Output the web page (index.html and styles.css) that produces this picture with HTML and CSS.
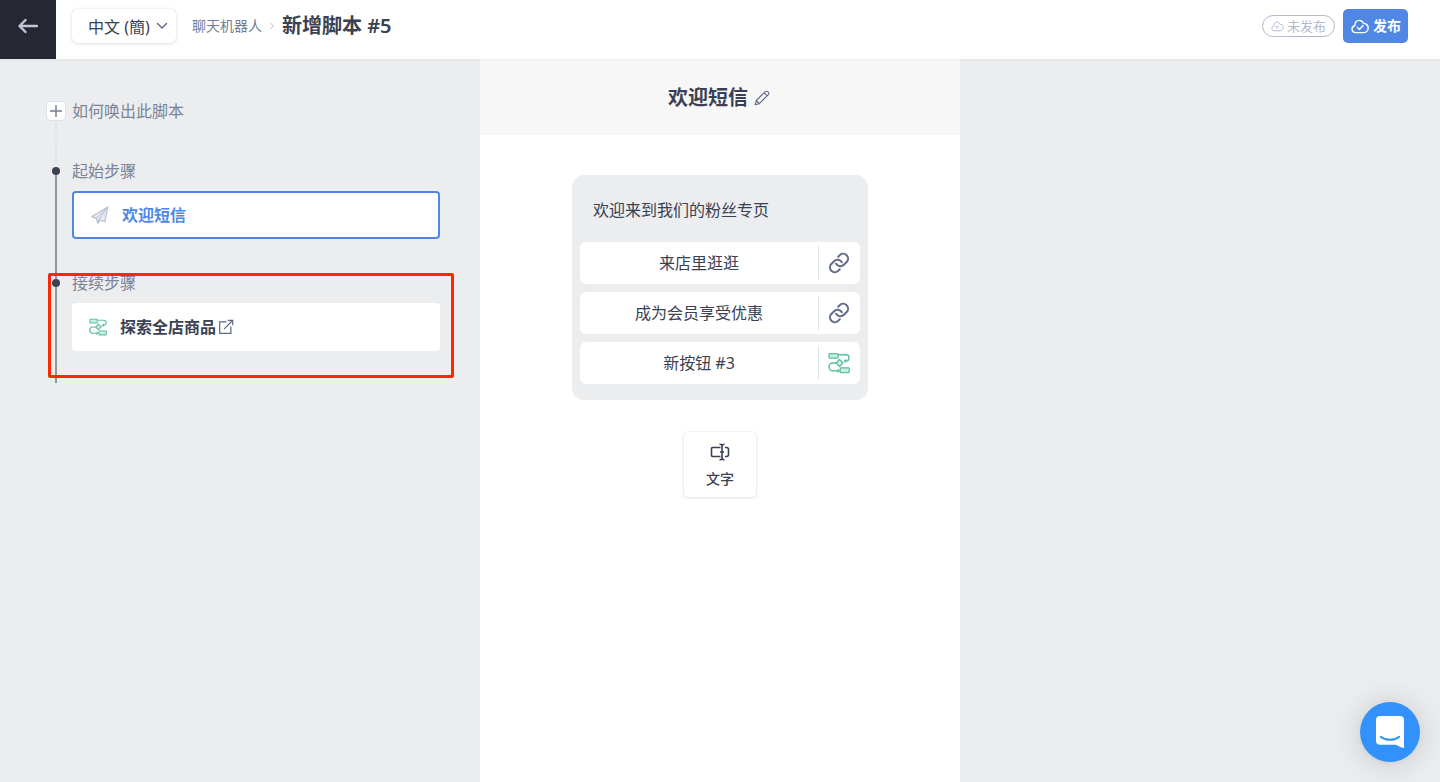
FILE: index.html
```html
<!DOCTYPE html>
<html lang="zh-CN">
<head>
<meta charset="utf-8">
<title>新增脚本 #5</title>
<link rel="stylesheet" href="styles.css">
</head>
<body>
<svg class="defs" aria-hidden="true">
  <symbol id="flow" viewBox="0 0 22 22">
    <g fill="#c9efe3" stroke="#5cbfa1" stroke-width="1.3">
      <rect x="1.1" y="1.6" width="9" height="4.6" rx=".6"/>
      <rect x="12.2" y="15.8" width="9" height="4.8" rx=".6"/>
      <path d="M11.5 7.500l3.500 3.500-3.500 3.500-3.500-3.500z"/>
    </g>
    <g fill="none" stroke="#5cbfa1" stroke-width="1.4">
      <path d="M10.200 2.800h8a2.700 2.700 0 0 1 2.700 2.700v.7A2.700 2.700 0 0 1 18.200 8.900h-1M8 11H4.600a3.500 3.500 0 0 0-3.500 3.500v.7a3.500 3.500 0 0 0 3.500 3.500h6.500"/>
    </g>
    <path d="M18.200 6.700v4.400l-2.800-2.200zM9.300 16.500v4.400l2.900-2.200z" fill="#5cbfa1"/>
  </symbol>
  <symbol id="link" viewBox="1 1 22 22">
    <g fill="none" stroke="#626c8a" stroke-width="2" stroke-linecap="round">
      <path d="M9.100 12.700a5 5 0 0 0 7.800 1.100l3-3a4.900 4.900 0 0 0-6.900-6.900l-1.800 1.800"/>
      <path d="M14.900 11.300a5 5 0 0 0-7.800-1.100l-3 3a4.900 4.900 0 0 0 6.900 6.900l1.800-1.800"/>
    </g>
  </symbol>
</svg>

<header class="topbar">
  <button class="back" aria-label="返回">
    <svg width="20" height="16" viewBox="0 0 20 16"><path d="M7.500 2L1.500 8l6 6M2 8h17" fill="none" stroke="#c3c6d8" stroke-width="2.400" stroke-linecap="round" stroke-linejoin="round"/></svg>
  </button>
  <div class="language">
    <select aria-label="语言"><option>中文 (簡)</option></select>
    <svg class="chevron" width="12" height="8" viewBox="0 0 12 8"><path d="M1.500 1.500L6 6l4.500-4.500" fill="none" stroke="#5d6782" stroke-width="1.400" stroke-linecap="round" stroke-linejoin="round"/></svg>
  </div>
  <nav class="crumbs">
    <a href="#">聊天机器人</a>
    <svg width="4" height="8" viewBox="0 0 4 8"><path d="M.6 1.200L3.300 4 .6 6.800" fill="none" stroke="#b5bac6"/></svg>
    <h1>新增脚本 #5</h1>
  </nav>
  <span class="status">
    <svg width="13" height="11" viewBox="0 0 20 16"><path d="M5 14.600a3.900 3.900 0 0 1-.8-7.700C4.300 3.500 6.500 1.200 9.200 1.200c2.200 0 3.900 1.200 4.700 3.300 2.800-.1 5.100 2.200 5.100 5s-2.300 5.100-5 5.100zM7.500 6.500l4.500 4.600M12 6.500l-4.500 4.600" fill="none" stroke="currentColor" stroke-width="1.500"/></svg>
    未发布
  </span>
  <button class="publish">
    <svg width="18" height="15" viewBox="0 0 20 16"><path d="M5 14.800a3.900 3.900 0 0 1-.8-7.700C4.300 3.500 6.500 1.200 9.200 1.200c2.200 0 3.900 1.200 4.700 3.300 2.800-.1 5.200 2.200 5.200 5.100s-2.300 5.200-5.100 5.200zM7.200 9l2.200 2.300 4-4.300" fill="none" stroke="currentColor" stroke-width="1.600" stroke-linecap="round" stroke-linejoin="round"/></svg>
    发布
  </button>
</header>

<main class="workspace">
  <aside class="outline">
    <section class="step trigger">
      <div class="rail">
        <button class="add" aria-label="新增"><svg width="12" height="12" viewBox="0 0 12 12"><path d="M6 0v12M0 6h12" stroke="#747c91" stroke-width="1.400"/></svg></button>
        <span class="line dashed"></span>
      </div>
      <h2>如何唤出此脚本</h2>
    </section>
    <section class="step">
      <div class="rail"><span class="lead dashed"></span><span class="dot"></span><span class="line"></span></div>
      <div class="body">
        <h2>起始步骤</h2>
        <button class="card active">
          <svg width="18" height="18" viewBox="0 0 18 18"><path d="M16.800.900L.9 10.600l4.300 1.900 1.800 4.600 2.100-2.900 4.800 1.600z" fill="#e6eaf2" stroke="#b8c0cf" stroke-width="1.200" stroke-linejoin="round"/><path d="M16.800.900L5.200 12.500M16.800.900L7.800 13.600 7 17.100M7.800 13.600l1.300.600" fill="none" stroke="#b8c0cf"/></svg>
          <span>欢迎短信</span>
        </button>
      </div>
    </section>
    <section class="step">
      <div class="rail"><span class="lead"></span><span class="dot"></span><span class="line"></span></div>
      <div class="body">
        <h2>接续步骤</h2>
        <a class="card" href="#">
          <svg width="18" height="18"><use href="#flow"/></svg>
          <span class="card-link">探索全店商品<svg width="16" height="16" viewBox="0 0 16 16"><path d="M8.500 2.800H1.700v11.500h11.200V7.500M9.800 1.300h4.900v4.900M14.500 1.500L6 10.200" fill="none" stroke="#5d6782" stroke-width="1.200"/></svg></span>
        </a>
      </div>
      <span class="highlight"></span>
    </section>
  </aside>

  <section class="editor">
    <header class="editor-head">
      <h2>欢迎短信</h2>
      <button class="edit" aria-label="编辑"><svg width="16" height="16" viewBox="0 0 16 16"><path d="M1.200 14.800l1.100-4.300 8.800-8.700c.8-.8 2.300-.6 3 .1s.8 2.100 0 2.900l-8.800 8.800zM2.300 10.500l3 3.100M10.200 2.700l3 3.100" fill="none" stroke="#626c8a" stroke-width="1.100" stroke-linejoin="round"/></svg></button>
    </header>
    <div class="canvas">
      <div class="bubble">
        <p>欢迎来到我们的粉丝专页</p>
        <div class="reply"><button class="label">来店里逛逛</button><button class="action" aria-label="链接"><svg width="22" height="22"><use href="#link"/></svg></button></div>
        <div class="reply"><button class="label">成为会员享受优惠</button><button class="action" aria-label="链接"><svg width="22" height="22"><use href="#link"/></svg></button></div>
        <div class="reply"><button class="label">新按钮 #3</button><button class="action" aria-label="流程"><svg width="22" height="22"><use href="#flow"/></svg></button></div>
      </div>
      <button class="add-text">
        <svg width="20" height="18" viewBox="0 0 20 18"><path d="M10.500 4.500H2.500a1 1 0 0 0-1 1v7a1 1 0 0 0 1 1h8M15 4.500h1.500a2 2 0 0 1 2 2v5a2 2 0 0 1-2 2H15M9.500 1.200c1.300 0 2.500.5 2.500 1.500 0-1 1.200-1.500 2.500-1.500M9.500 16.800c1.300 0 2.500-.5 2.500-1.500 0 1 1.200 1.500 2.500 1.500M12 2.500v13M10 9h4" fill="none" stroke="#3a4152" stroke-width="1.600"/></svg>
        文字
      </button>
    </div>
  </section>
</main>

<button class="chat" aria-label="客服">
  <svg width="28" height="32" viewBox="0 0 28 32"><path d="M4 0h20a4 4 0 0 1 4 4v28c-3-.6-5.500-1.800-8-3.200H4a4 4 0 0 1-4-4V4a4 4 0 0 1 4-4z" fill="#fff"/><path d="M4.800 20.700c5.200 4.200 13.200 4.200 18.400 0" fill="none" stroke="#3391fb" stroke-width="2" stroke-linecap="round"/></svg>
</button>
</body>
</html>
```

FILE: styles.css
```css
* { box-sizing: border-box; }
body {
  margin: 0;
  min-height: 100vh;
  display: flex;
  flex-direction: column;
  background: #ecedef;
  color: #3a4152;
  font: 16px/24px "Noto Sans", "Noto Sans CJK SC", sans-serif;
}
h1, h2, p { margin: 0; }
button, select { font: inherit; color: inherit; border: 0; padding: 0; background: none; cursor: pointer; }
a { color: inherit; text-decoration: none; }
svg { flex: none; display: block; }
.defs { position: absolute; width: 0; height: 0; }

.topbar {
  display: flex;
  align-items: flex-start;
  height: 59px;
  padding-right: 32px;
  background: #fff;
  box-shadow: 0 1px 2px rgba(40, 50, 70, .06);
  position: relative;
}
.back { width: 56px; height: 59px; padding-bottom: 7px; display: grid; place-items: center; background: #252833; }
.language {
  display: flex;
  align-items: center;
  height: 34px;
  margin: 9px 16px 0;
  padding-right: 8px;
  border-radius: 6px;
  box-shadow: 0 0 2px rgba(40, 50, 70, .12), 0 1px 4px rgba(40, 50, 70, .12);
}
.language select { appearance: none; height: 34px; padding: 1px 20px 0 16px; margin-right: -14px; outline: 0; }
.chevron { pointer-events: none; }
.crumbs { display: flex; align-items: center; gap: 8px; height: 52px; flex: 1; }
.crumbs a { font-size: 14px; color: #747c91; }
.crumbs h1 { font-size: 20px; line-height: 28px; font-weight: 600; }
.status {
  display: flex;
  align-items: center;
  gap: 3px;
  height: 22px;
  margin: 15px 8px 0 0;
  padding: 0 8px;
  border: 1px solid #b5bace;
  border-radius: 11px;
  color: #b5bace;
  font-size: 13px;
}
.publish {
  display: flex;
  align-items: center;
  gap: 4px;
  height: 34px;
  margin-top: 9px;
  padding: 0 7px 0 8px;
  border-radius: 5px;
  background: #5087e5;
  color: #fff;
  font-size: 14px;
  font-weight: 700;
}

.workspace { flex: 1; display: grid; grid-template-columns: 1fr 1fr 1fr; }
.outline { padding: 40px; }
.outline h2 { font-size: 16px; font-weight: 400; color: #7b8396; }
.step { display: grid; grid-template-columns: 32px 1fr; position: relative; }
.trigger { min-height: 60px; }
.rail { display: flex; flex-direction: column; align-items: center; }
.lead, .line { width: 2px; background: #9096a3; }
.lead { height: 8px; }
.line { flex: 1; }
.dashed { background: repeating-linear-gradient(#e1e5ec 0 5px, transparent 5px 7px); }
.dot { width: 8px; height: 8px; border-radius: 50%; background: #3a4152; }
.add { width: 20px; height: 20px; margin: 2px 0; display: grid; place-items: center; background: #fff; border: 1px solid #dbe1ea; border-radius: 4px; }
.body { padding-bottom: 32px; }
.card {
  display: flex;
  align-items: center;
  gap: 13px;
  width: 100%;
  height: 48px;
  margin-top: 8px;
  padding: 0 17px;
  border-radius: 4px;
  background: #fff;
  font-weight: 600;
}
.card.active { border: 2px solid #5087e5; color: #5087e5; }
.card-link { display: flex; align-items: center; gap: 2px; }
.highlight { position: absolute; inset: 2px -14px 5px 8px; border: 3px solid #ff2600; border-radius: 2px; pointer-events: none; }

.editor { background: #fff; }
.editor-head { display: flex; align-items: center; justify-content: center; gap: 6px; height: 76px; padding: 2px 2px 0 0; background: #f7f7f7; }
.editor-head h2 { font-size: 20px; line-height: 28px; font-weight: 600; }
.canvas { display: flex; flex-direction: column; align-items: center; gap: 32px; padding: 40px 16px; }
.bubble { width: 100%; max-width: 296px; padding: 8px 8px 16px; border-radius: 12px; background: #ecedef; }
.bubble p { padding: 15px 13px 20px; }
.reply { display: flex; align-items: center; height: 42px; border-radius: 6px; background: #fff; }
.reply + .reply { margin-top: 8px; }
.label { flex: 1; }
.action { width: 42px; height: 34px; padding-right: 2px; display: grid; place-items: center; border-left: 1px solid #e1e5ec; }
.add-text {
  display: flex;
  flex-direction: column;
  align-items: center;
  gap: 6px;
  padding: 11px 22px 6px;
  border-radius: 4px;
  background: #fff;
  box-shadow: 0 0 2px rgba(40, 50, 70, .12), 0 1px 3px rgba(40, 50, 70, .12);
  font-size: 14px;
  font-weight: 500;
}
.chat {
  position: fixed;
  right: 20px;
  bottom: 20px;
  width: 60px;
  height: 60px;
  display: grid;
  place-items: center;
  border-radius: 50%;
  background: #3391fb;
  box-shadow: 0 1px 6px rgba(0, 0, 0, .06), 0 2px 32px rgba(0, 0, 0, .16);
}
```
